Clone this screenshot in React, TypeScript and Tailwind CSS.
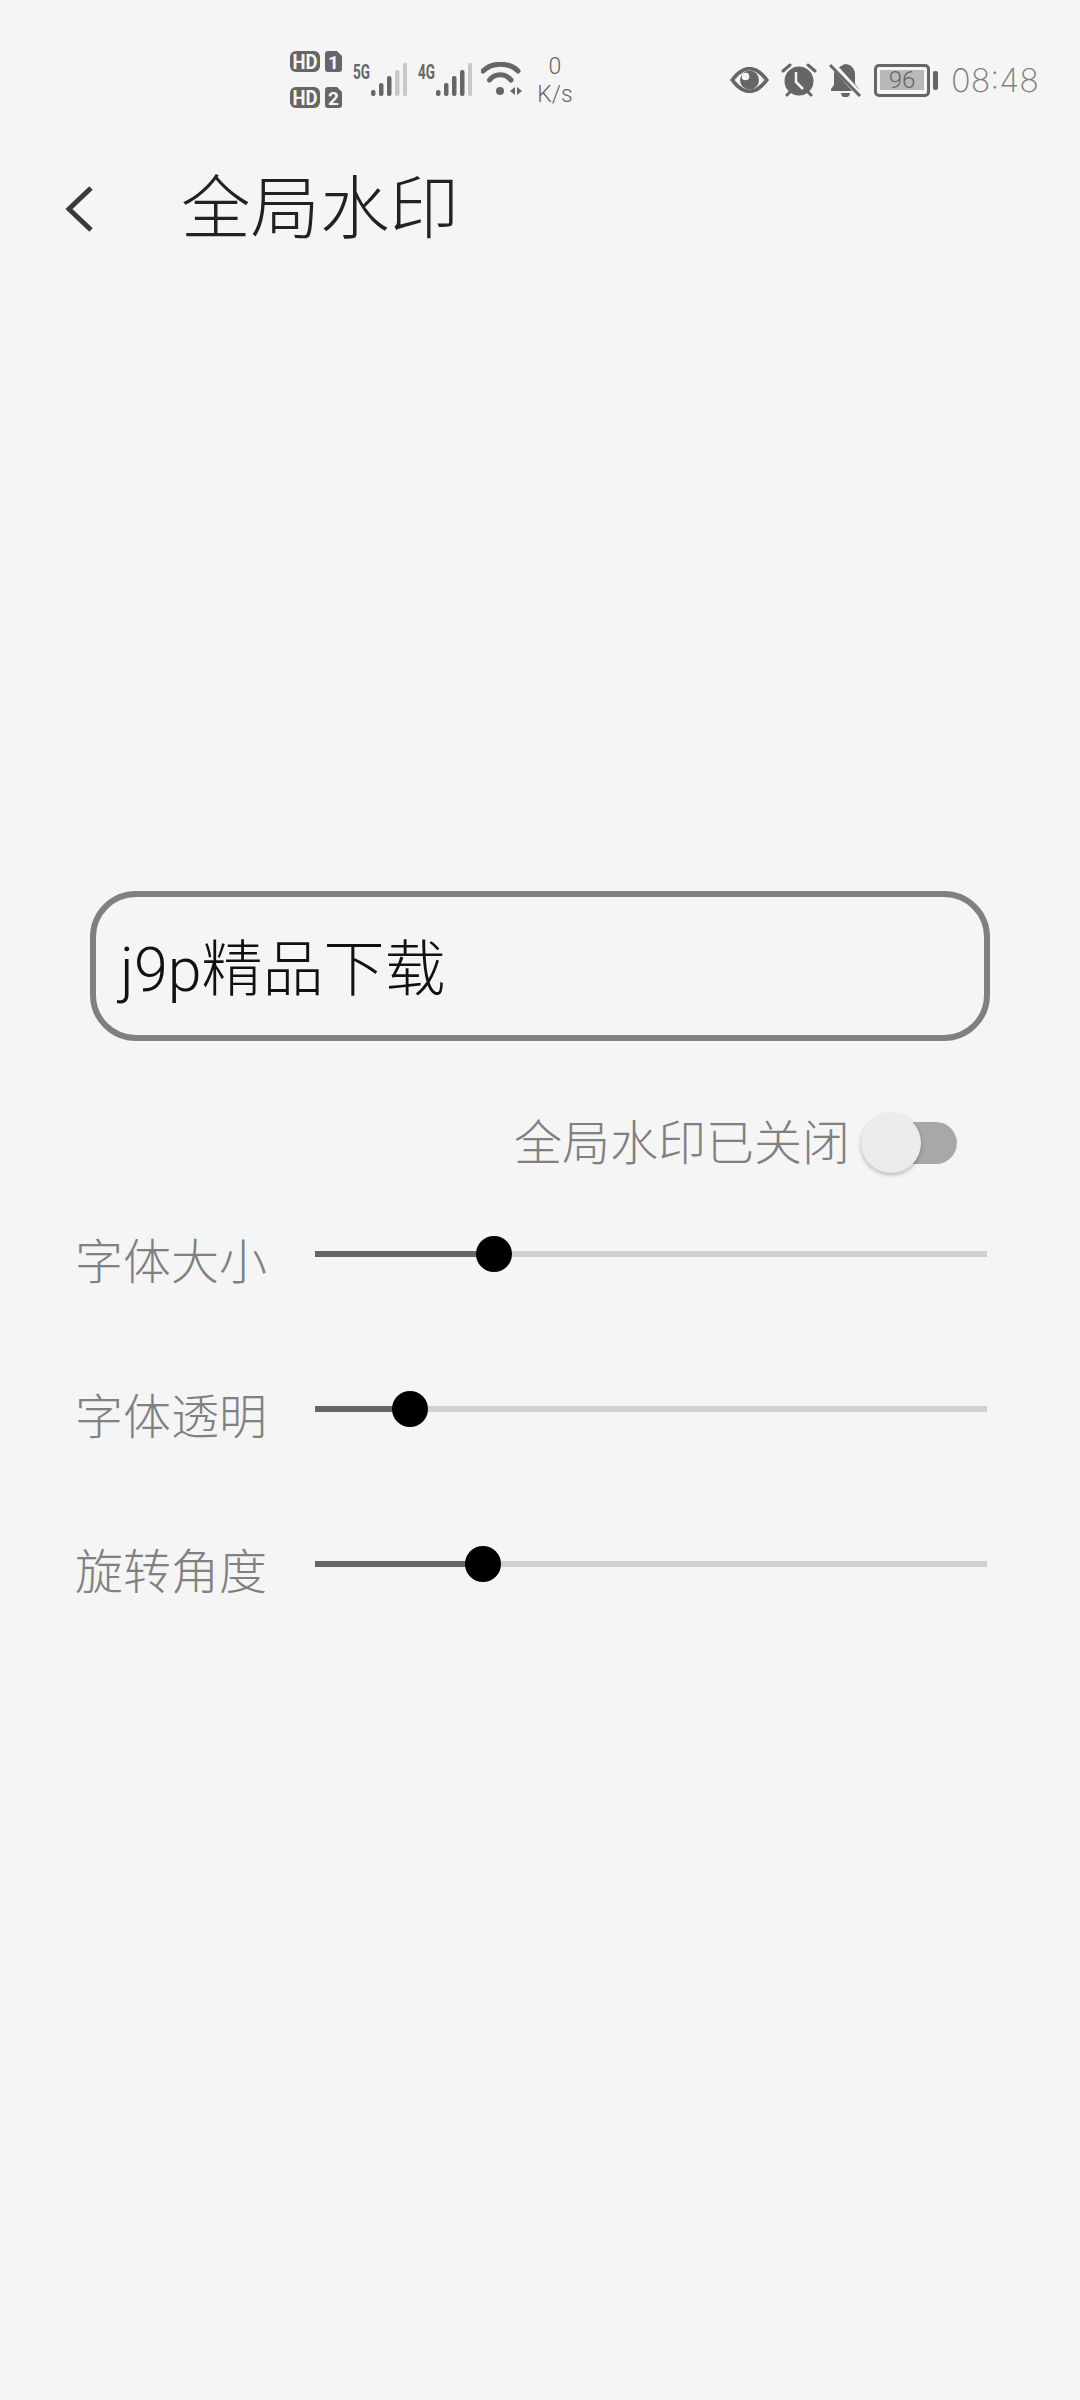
import React from "react";

const CJK = "font-['Inter','Noto_Sans_CJK_SC',sans-serif]";

function SimBadge({ n }: { n: string }) {
  return (
    <svg className="mt-[-4px]" width="52" height="26" viewBox="0 -4 52 26">
      <rect x="0" y="0" width="30" height="21" rx="6" fill="#666" />
      <text x="15" y="17.500" textAnchor="middle" fontSize="20" fontWeight="700" fill="#f5f5f5" fontFamily="Roboto, sans-serif" textLength="25" lengthAdjust="spacingAndGlyphs">HD</text>
      <path d="M38 0h9l5 5v13a3 3 0 0 1-3 3H38a3 3 0 0 1-3-3V3a3 3 0 0 1 3-3z" fill="#666" />
      <text x="43.500" y="17.500" textAnchor="middle" fontSize="19" fontWeight="700" fill="#f5f5f5" fontFamily="Roboto, sans-serif">{n}</text>
    </svg>
  );
}

function Signal({ label, dim }: { label: string; dim: number }) {
  const bars = [
    { x: 18, y: 27, h: 6 },
    { x: 26, y: 20, h: 13 },
    { x: 34, y: 13, h: 20 },
    { x: 42, y: 7, h: 26 },
    { x: 50, y: 0, h: 33 },
  ];
  return (
    <svg className="mt-[-6px]" width="54" height="40" viewBox="0 -6 54 40">
      <text x="0" y="16" fontSize="20" fontWeight="700" fill="#666" fontFamily="Roboto, sans-serif" textLength="17" lengthAdjust="spacingAndGlyphs">{label}</text>
      {bars.map((b, i) => (
        <rect key={i} x={b.x} y={b.y} width="4.500" height={b.h} rx="2" fill={i >= 5 - dim ? "#c8c8c8" : "#666"} />
      ))}
    </svg>
  );
}

function Wifi() {
  return (
    <svg width="42" height="34" viewBox="0 0 42 34" fill="none">
      <path d="M2 9C11 0 28 0 37 9" stroke="#666" strokeWidth="5" strokeLinecap="round" />
      <path d="M8.500 18C14 11 24 11 30 18" stroke="#666" strokeWidth="5" strokeLinecap="round" />
      <circle cx="19" cy="29" r="4" fill="#666" />
      <path d="M34 25v8l-5-4zM36 25v8l5-4z" fill="#666" />
    </svg>
  );
}

function Eye() {
  return (
    <svg width="41" height="28" viewBox="0 0 41 28">
      <path d="M1 14C9 3 15 1 20.500 1S32 3 40 14C32 25 26 27 20.500 27S9 25 1 14z" fill="#666" />
      <path d="M5.500 14C12 6.500 16 4.500 20.500 4.500S29 6.500 35.500 14C29 21.500 25 23.500 20.500 23.500S12 21.500 5.500 14z" fill="#f5f5f5" />
      <circle cx="20.500" cy="14" r="9.500" fill="#666" />
      <circle cx="16.500" cy="10.500" r="3.800" fill="#f5f5f5" />
    </svg>
  );
}

function Alarm() {
  return (
    <svg width="36" height="34" viewBox="0 0 36 34" fill="none">
      <circle cx="18" cy="18" r="14.500" fill="#666" />
      <path d="M2 8l7-6M34 8l-7-6M6 32l3-3M30 32l-3-3" stroke="#666" strokeWidth="3" strokeLinecap="round" />
      <path d="M15 9v10l7 7" stroke="#f5f5f5" strokeWidth="2.500" strokeLinejoin="round" />
    </svg>
  );
}

function BellOff() {
  return (
    <svg width="33" height="34" viewBox="0 0 33 34" fill="none">
      <path d="M16 1c5 0 10 4 10 10v10l4 5v2H2v-2l3-4V11c0-2 .5-3.500 1.500-5L16 1z" fill="#666" />
      <path d="M12 30h9a4.500 4.500 0 0 1-9 0z" fill="#666" />
      <path d="M3 1l28 31" stroke="#f5f5f5" strokeWidth="6" />
      <path d="M1 2l30 31" stroke="#666" strokeWidth="3" />
    </svg>
  );
}

function Battery() {
  return (
    <div className="flex items-center gap-[3px]">
      <div className="w-[56px] h-[33px] rounded-[5px] border-[3px] border-[#666] pt-[3px] px-[3px] pb-[4px] flex">
        <div className="flex-1 bg-[#b9b9b9] flex items-center justify-center text-[#666] text-[24px] leading-none font-['Roboto',sans-serif] font-light">96</div>
      </div>
      <div className="w-[5px] h-[19px] rounded-[2px] bg-[#666]" />
    </div>
  );
}

function StatusBar() {
  return (
    <div className="h-[120px] flex items-start pt-[51px] pl-[290px]">
      <div className="flex flex-col gap-[14px]">
        <SimBadge n="1" />
        <SimBadge n="2" />
      </div>
      <div className="mt-[12px] ml-[11px]">
        <Signal label="5G" dim={2} />
      </div>
      <div className="mt-[12px] ml-[11px]">
        <Signal label="4G" dim={1} />
      </div>
      <div className="mt-[11px] ml-[9px]">
        <Wifi />
      </div>
      <div className="ml-[13px] mt-[2px] w-[38px] flex flex-col items-center text-[#666] text-[23px] leading-[28px] font-['Roboto',sans-serif] font-light">
        <span>0</span>
        <span>K/s</span>
      </div>
      <div className="ml-[155px] mt-[12px] flex items-center h-[34px]">
        <Eye />
        <div className="ml-[11px]"><Alarm /></div>
        <div className="ml-[12px]"><BellOff /></div>
        <div className="ml-[12px]"><Battery /></div>
        <span className="ml-[13px] pt-[3px] text-[32.500px] leading-none text-[#808080] font-['Inter',sans-serif] font-extralight">08:48</span>
      </div>
    </div>
  );
}

function Header() {
  return (
    <div className="flex items-center h-[88px] mt-[45px]">
      <svg className="ml-[64px]" width="30" height="48" viewBox="0 0 30 48" fill="none">
        <path d="M27 3L5 24l22 21" stroke="#3a3a3a" strokeWidth="5" />
      </svg>
      <h1 className={`ml-[87px] text-[69.500px] leading-none text-[#222] font-light ${CJK}`}>全局水印</h1>
    </div>
  );
}

function SliderRow({ label, value }: { label: string; value: number }) {
  return (
    <div className="flex items-center h-[36px] mb-[119px] pl-[75px]">
      <span className={`w-[240px] pt-[15px] text-[48px] leading-none text-[#808080] font-light ${CJK}`}>{label}</span>
      <div className="relative w-[672px] h-[6px] bg-[#d0d0d0]">
        <div className="h-full bg-[#666]" style={{ width: value }} />
        <div className="absolute top-[-15px] w-[36px] h-[36px] rounded-full bg-black ml-[-18px]" style={{ left: value }} />
      </div>
    </div>
  );
}

export default function App() {
  return (
    <div className="w-[1080px] h-[2400px] bg-[#f5f5f5] overflow-hidden">
      <StatusBar />
      <Header />
      <div className="mt-[638px] mx-[90px] w-[900px] h-[150px] rounded-[46px] border-[6px] border-[#808080] flex items-center pl-[24px]">
        <span className="pt-[9px] text-[61px] leading-none text-[#111] font-light font-['Roboto','Noto_Sans_CJK_SC',sans-serif]">j9p精品下载</span>
      </div>
      <div className="mt-[70px] h-[64px] flex items-center pl-[514px]">
        <span className={`text-[48px] leading-none text-[#808080] font-light ${CJK}`}>全局水印已关闭</span>
        <div className="ml-[11px] relative w-[96px] h-[42px]">
          <div className="ml-[36px] w-[60px] h-full rounded-r-full bg-[#a8a8a8]" />
          <div className="absolute left-0 top-[-9px] w-[60px] h-[60px] rounded-full bg-[#ececec] shadow-[0_2px_4px_rgba(0,0,0,0.25)]" />
        </div>
      </div>
      <div className="mt-[61px]">
        <SliderRow label="字体大小" value={179} />
        <SliderRow label="字体透明" value={95} />
        <SliderRow label="旋转角度" value={168} />
      </div>
    </div>
  );
}
